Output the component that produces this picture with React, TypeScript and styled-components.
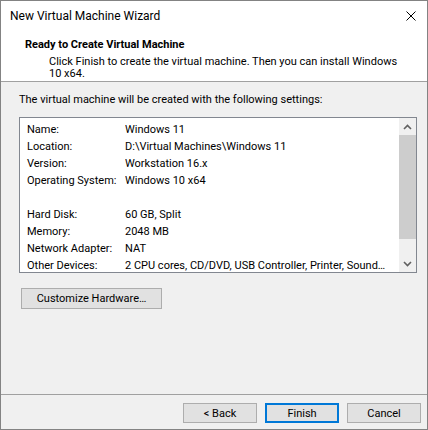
import React from 'react';
import styled, { createGlobalStyle } from 'styled-components';

const GlobalStyle = createGlobalStyle`
  html, body {
    margin: 0;
    padding: 0;
    background: #f0f0f0;
  }
  * {
    box-sizing: border-box;
  }
`;

const Window = styled.div`
  width: 428px;
  height: 430px;
  border: 1px solid #838383;
  background: #f0f0f0;
  display: flex;
  flex-direction: column;
  font-family: Roboto, sans-serif;
  font-size: 11px;
  color: #000;
  overflow: hidden;
`;

const TitleBar = styled.div`
  height: 30px;
  background: #fff;
  display: flex;
  align-items: center;
  justify-content: space-between;
  padding: 0 11px 0 9px;
  font-size: 12px;
`;

const CloseButton = styled.div`
  width: 10px;
  height: 10px;
  display: flex;
  margin-top: -1px;
`;

const Header = styled.div`
  background: #fff;
  height: 51px;
  padding: 6px 0 0 24px;
  border-bottom: 1px solid #a0a0a0;
`;

const Heading = styled.div`
  font-weight: 700;
  line-height: 16px;
`;

const Subtitle = styled.div`
  margin: 3px 0 0 24px;
  line-height: 12px;
  max-width: 355px;
`;

const Body = styled.div`
  flex: 1;
  padding: 10px 10px 0 18px;
  display: flex;
  flex-direction: column;
  align-items: flex-start;
`;

const Intro = styled.div`
  line-height: 16px;
`;

const ListBox = styled.div`
  margin-top: 9px;
  width: 398px;
  height: 156px;
  border: 1px solid #828790;
  background: #fff;
  display: flex;
  overflow: hidden;
`;

const ListContent = styled.div`
  flex: 1;
  min-width: 0;
  padding: 3px 4px 0 7px;
`;

const Row = styled.div`
  display: grid;
  grid-template-columns: 98px 1fr;
  height: 17px;
  line-height: 17px;
  white-space: nowrap;
`;

const Value = styled.span`
  overflow: hidden;
`;

const ScrollBar = styled.div`
  width: 17px;
  background: #f0f0f0;
  display: flex;
  flex-direction: column;
`;

const ScrollArrow = styled.div`
  height: 17px;
  display: flex;
  align-items: center;
  justify-content: center;
`;

const ScrollTrack = styled.div`
  flex: 1;
  display: flex;
  flex-direction: column;
`;

const ScrollThumb = styled.div`
  height: 104px;
  background: #cdcdcd;
`;

const Button = styled.button<{ $primary?: boolean }>`
  font-family: Roboto, sans-serif;
  font-size: 11px;
  color: #000;
  background: #e1e1e1;
  border: ${({ $primary }) => ($primary ? '2px solid #0078d7' : '1px solid #adadad')};
  border-radius: 0;
  padding: 0;
  margin: 0;
  display: flex;
  align-items: center;
  justify-content: center;
`;

const CustomizeButton = styled(Button)`
  margin-top: 15px;
  margin-left: 2px;
  width: 141px;
  height: 21px;
`;

const Footer = styled.div`
  border-top: 1px solid #a0a0a0;
  height: 35px;
  display: flex;
  justify-content: flex-end;
  gap: 8px;
  padding: 8px 6px 0 0;
`;

const FooterButton = styled(Button)`
  width: 74px;
  height: 20px;
`;

const rows: [string, string][] = [
  ['Name:', 'Windows 11'],
  ['Location:', 'D:\\Virtual Machines\\Windows 11'],
  ['Version:', 'Workstation 16.x'],
  ['Operating System:', 'Windows 10 x64'],
  ['', ''],
  ['Hard Disk:', '60 GB, Split'],
  ['Memory:', '2048 MB'],
  ['Network Adapter:', 'NAT'],
  ['Other Devices:', '2 CPU cores, CD/DVD, USB Controller, Printer, Sound…'],
  ['', ''],
];

const Chevron = ({ down }: { down?: boolean }) => (
  <svg width="9" height="6" viewBox="0 0 9 6">
    <path
      d={down ? 'M1 1 L4.5 4.5 L8 1' : 'M1 5 L4.5 1.5 L8 5'}
      fill="none"
      stroke="#606060"
      strokeWidth="1.6"
    />
  </svg>
);

export default function App() {
  return (
    <>
      <GlobalStyle />
      <Window>
        <TitleBar>
          <span>New Virtual Machine Wizard</span>
          <CloseButton>
            <svg width="10" height="10" viewBox="0 0 10 10">
              <path d="M0.5 0.5 L9.5 9.5 M9.5 0.5 L0.5 9.5" stroke="#000" strokeWidth="1" />
            </svg>
          </CloseButton>
        </TitleBar>
        <Header>
          <Heading>Ready to Create Virtual Machine</Heading>
          <Subtitle>
            Click Finish to create the virtual machine. Then you can install Windows 10 x64.
          </Subtitle>
        </Header>
        <Body>
          <Intro>The virtual machine will be created with the following settings:</Intro>
          <ListBox>
            <ListContent>
              {rows.map(([label, value], i) => (
                <Row key={i}>
                  <span>{label}</span>
                  <Value>{value}</Value>
                </Row>
              ))}
            </ListContent>
            <ScrollBar>
              <ScrollArrow>
                <Chevron />
              </ScrollArrow>
              <ScrollTrack>
                <ScrollThumb />
              </ScrollTrack>
              <ScrollArrow>
                <Chevron down />
              </ScrollArrow>
            </ScrollBar>
          </ListBox>
          <CustomizeButton>Customize Hardware…</CustomizeButton>
        </Body>
        <Footer>
          <FooterButton>&lt; Back</FooterButton>
          <FooterButton $primary>Finish</FooterButton>
          <FooterButton>Cancel</FooterButton>
        </Footer>
      </Window>
    </>
  );
}
